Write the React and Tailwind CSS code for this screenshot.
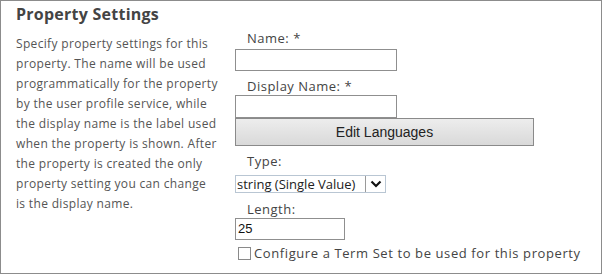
const description = [
    "Specify property settings for this",
    "property. The name will be used",
    "programmatically for the property",
    "by the user profile service, while",
    "the display name is the label used",
    "when the property is shown. After",
    "the property is created the only",
    "property setting you can change",
    "is the display name.",
];

export default function App() {
    return (
        <div className="w-[602px] h-[274px] border border-[#8c8c8c] bg-white flex text-[#444] font-['Open_Sans',sans-serif] overflow-hidden">
            {/* description column */}
            <div className="w-[219px] pl-[15px] pt-[3px]">
                <h2 className="text-[16px] leading-[20px] font-bold tracking-[0.25px] text-[#444]">Property Settings</h2>
                <p className="mt-[10px] text-[12px] leading-[20px] tracking-[0.33px] text-[#555] whitespace-nowrap">
                    {description.map((line) => (
                        <span key={line} className="block">{line}</span>
                    ))}
                </p>
            </div>

            {/* form column */}
            <div className="flex flex-col pl-[15px] pt-[28px]">
                <label className="pl-[12px] text-[13px] leading-[18px] tracking-[0.5px]">Name: *</label>
                <div className="mt-[2px] w-[162px] h-[22px] border border-[#8f8f8f] bg-white"></div>
                <label className="mt-[6px] pl-[12px] text-[13px] leading-[18px] tracking-[0.5px]">Display Name: *</label>
                <div className="w-[162px] h-[23px] border border-[#8f8f8f] bg-white"></div>
                <button className="w-[299px] h-[28px] border border-[#8a8a8a] bg-gradient-to-b from-[#ededed] to-[#d9d9d9] text-[14px] text-[#222] font-['Liberation_Sans',sans-serif] text-center">
                    Edit Languages
                </button>
                <label className="mt-[6px] pl-[12px] text-[13px] leading-[18px] tracking-[0.5px]">Type:</label>
                <div className="mt-[5px] flex items-stretch w-[151px] h-[18px] border border-[#b9c6d3] bg-white">
                    <span className="flex-1 pl-[1px] text-[13px] leading-[16px] text-[#222] whitespace-nowrap">string (Single Value)</span>
                    <span className="w-[20px] border-l border-[#9a9a9a] flex items-center justify-center bg-white">
                        <svg width="12" height="8" viewBox="0 0 12 8">
                            <path d="M1.5 1.5 L6 6 L10.5 1.5" fill="none" stroke="#111" strokeWidth="2.2" />
                        </svg>
                    </span>
                </div>
                <label className="mt-[7px] pl-[12px] text-[13px] leading-[18px] tracking-[0.5px]">Length:</label>
                <div className="w-[110px] h-[22px] border border-[#8f8f8f] bg-white pl-[2px] text-[13px] leading-[20px] text-[#111] font-['Liberation_Sans',sans-serif]">
                    25
                </div>
                <div className="mt-[4px] flex items-center h-[18px] pl-[3px]">
                    <span className="w-[13px] h-[13px] border border-[#8a8a8a] bg-white"></span>
                    <span className="ml-[3px] text-[13px] leading-[18px] tracking-[0.6px] whitespace-nowrap">Configure a Term Set to be used for this property</span>
                </div>
            </div>
        </div>
    );
}
